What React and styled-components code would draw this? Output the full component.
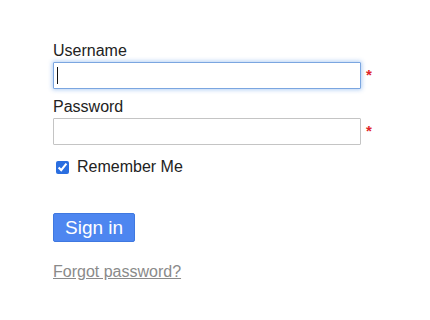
import React from "react";
import styled, { createGlobalStyle } from "styled-components";

const Global = createGlobalStyle`
  html, body { margin: 0; padding: 0; background: #fff; }
  body { font-family: "Liberation Sans", Arial, sans-serif; color: #222; }
`;

const Form = styled.form`
  display: flex;
  flex-direction: column;
  padding: 42px 0 0 53px;
  width: 330px;
`;

const Label = styled.label`
  display: block;
  font-size: 16px;
  line-height: 18px;
  color: #222;
  margin-top: ${(p) => p.$mt || 0}px;
`;

const FieldRow = styled.div`
  display: flex;
  align-items: center;
  margin-top: 2px;
`;

const InputWrap = styled.div`
  position: relative;
  width: 308px;
  height: 27px;
`;

const Input = styled.input`
  box-sizing: border-box;
  width: 100%;
  height: 100%;
  margin: 0;
  padding: 0 4px;
  font: 16px "Liberation Sans", Arial, sans-serif;
  background: #fff;
  border: 1px solid ${(p) => (p.$focused ? "#7ba6e0" : "#c4c4c4")};
  border-radius: 1px;
  box-shadow: ${(p) => (p.$focused ? "0 0 4px 1px rgba(90,150,230,0.45)" : "none")};
  outline: none;
  caret-color: transparent;
`;

const Caret = styled.span`
  position: absolute;
  left: 4px;
  top: 5px;
  width: 1px;
  height: 17px;
  background: #111;
`;

const Required = styled.span`
  color: #e0262a;
  font-size: 15px;
  font-weight: bold;
  margin-left: 5px;
  line-height: 16px;
  position: relative;
  top: -1px;
`;

const CheckRow = styled.label`
  display: flex;
  align-items: center;
  margin-top: 12px;
  font-size: 16px;
  line-height: 20px;
  color: #222;
`;

const Check = styled.input`
  width: 13px;
  height: 13px;
  margin: 0 8px 0 3px;
  accent-color: #2a6ee0;
`;

const Button = styled.button`
  align-self: flex-start;
  margin-top: 36px;
  height: 29px;
  padding: 0 11px;
  background: #4d86f0;
  border: 1px solid #3f78e0;
  border-radius: 2px;
  color: #fff;
  font: 19px "Liberation Sans", Arial, sans-serif;
  line-height: 27px;
  cursor: pointer;
`;

const Forgot = styled.a`
  align-self: flex-start;
  margin-top: 21px;
  font-size: 16px;
  line-height: 18px;
  color: #8a8a8a;
  text-decoration: underline;
`;

export default function App() {
  return (
    <>
      <Global />
      <Form onSubmit={(e) => e.preventDefault()}>
        <Label htmlFor="u">Username</Label>
        <FieldRow>
          <InputWrap>
            <Input id="u" type="text" $focused />
            <Caret />
          </InputWrap>
          <Required>*</Required>
        </FieldRow>
        <Label htmlFor="p" $mt={9}>Password</Label>
        <FieldRow>
          <InputWrap>
            <Input id="p" type="password" />
          </InputWrap>
          <Required>*</Required>
        </FieldRow>
        <CheckRow>
          <Check type="checkbox" defaultChecked />
          Remember Me
        </CheckRow>
        <Button type="submit">Sign in</Button>
        <Forgot href="#">Forgot password?</Forgot>
      </Form>
    </>
  );
}
